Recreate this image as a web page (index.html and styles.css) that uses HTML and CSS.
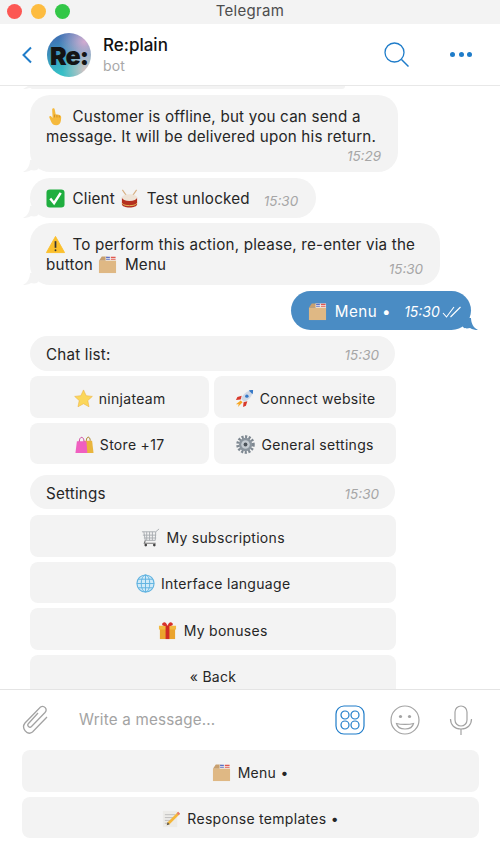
FILE: index.html
```html
<!DOCTYPE html>
<html lang="en">
<head>
    <meta charset="UTF-8">
    <meta name="viewport" content="width=device-width, initial-scale=1.0">
    <title>Telegram</title>
    <link rel="stylesheet" href="styles.css">
</head>
<body>
    <svg class="sprite" aria-hidden="true">
        <defs>
            <symbol id="e-point" viewBox="0 0 20 20">
                <path d="M7 1.500c1-.6 2 0 2.200 1l1 5 3.300.6c1.800.4 2.500 1.400 2.500 3l-.3 3c-.3 3-2.200 5-5 5-2.600 0-4-1-5-3L3.500 11c-.4-1 .8-2 1.800-1.200L7 11.500 6.500 3c0-.7 0-1.200.5-1.500z" fill="#f5b93c"/>
                <path d="M9 8v3M11.500 8.500v2.500M14 9v2" stroke="#c98320" stroke-width=".8" fill="none"/>
            </symbol>
            <symbol id="e-check" viewBox="0 0 20 20">
                <rect x=".5" y=".5" width="19" height="19" rx="3.500" fill="#1fae3f"/>
                <path d="M4.500 10l4 5 7-11" stroke="#fff" stroke-width="2.600" fill="none"/>
            </symbol>
            <symbol id="e-drum" viewBox="0 0 20 20">
                <path d="M2.500 1l5 7M17.500 1l-5 7" stroke="#d8b184" stroke-width="1.200"/>
                <path d="M2 9h16v7c0 2-3.500 3.500-8 3.500S2 18 2 16z" fill="#b5301f"/>
                <ellipse cx="10" cy="9" rx="8" ry="3.500" fill="#eee3d6"/>
                <path d="M2 15c2 2 4 2.500 8 2.500s6-.5 8-2.500" stroke="#e4b95c" stroke-width="1" fill="none"/>
            </symbol>
            <symbol id="e-warn" viewBox="0 0 20 20">
                <path d="M10 1.500L19.500 18.500H.5z" fill="#fbc02d" stroke="#fbc02d" stroke-linejoin="round"/>
                <path d="M10 6.500v7" stroke="#333" stroke-width="1.800"/>
                <circle cx="10" cy="16" r="1" fill="#333"/>
            </symbol>
            <symbol id="e-box" viewBox="0 0 20 20">
                <path d="M1 6l3-4.500h6L11 6z" fill="#c79f6f"/>
                <rect x="8" y="1.500" width="11" height="6" fill="#f3f0ee"/>
                <path d="M8.500 2.500h4M8.500 4.500h4" stroke="#5d6fc4" stroke-width="1.200"/>
                <path d="M13.500 2.500h5M13.500 4.500h5" stroke="#e0584f" stroke-width="1.200"/>
                <rect x="1" y="6" width="18" height="13" fill="#dfb884"/>
            </symbol>
            <symbol id="e-star" viewBox="0 0 20 20">
                <path d="M10 1l2.800 6 6.500.8-4.800 4.400 1.300 6.500L10 15.500l-5.800 3.200 1.300-6.500L.7 7.800 7.200 7z" fill="#fbd75b" stroke="#eeb13c" stroke-width=".6"/>
            </symbol>
            <symbol id="e-rocket" viewBox="0 0 20 20">
                <path d="M6.500 10.500C8 5.500 12.500 1.500 19 1c-.5 6.500-4.500 11-9.500 12.500z" fill="#cfd8e6"/>
                <path d="M14.500 1.500c1.500-.5 3-.5 4.500-.5 0 1.500 0 3-.5 4.500z" fill="#3578c7"/>
                <circle cx="12.500" cy="7.500" r="1.800" fill="#3578c7"/>
                <path d="M7 7L2.500 8.500 1 11.500l5-.5zM13 13l-1.500 4.500L8.500 19l.5-5z" fill="#d8392b"/>
                <path d="M6 12l2 2-5 5 1-3-3 0z" fill="#f6a623"/>
            </symbol>
            <symbol id="e-bags" viewBox="0 0 20 20">
                <path d="M10 6h8l1.500 13H9z" fill="#e9b53d"/>
                <path d="M12 6c0-5 4-5 4 0" stroke="#a77c1c" fill="none"/>
                <path d="M2 6.500h10L13 19H.5z" fill="#f05fc0"/>
                <path d="M4.500 7c0-6 5-6 5 0" stroke="#c93c97" fill="none"/>
            </symbol>
            <symbol id="e-gear" viewBox="0 0 20 20">
                <circle cx="10" cy="10" r="8" fill="none" stroke="#7d8790" stroke-width="3.500" stroke-dasharray="2.200 1.500"/>
                <circle cx="10" cy="10" r="7" fill="#8b959e"/>
                <circle cx="10" cy="10" r="4.500" fill="#c4cbd1"/>
                <circle cx="10" cy="10" r="2" fill="#4c535a"/>
            </symbol>
            <symbol id="e-cart" viewBox="0 0 20 20">
                <path d="M1 4h14.500L19 1M3 4l1.500 9h10.500l.5-9M2 7.500h14M3 10.500h13M6 4v9M9 4v9M12 4v9" stroke="#a9adb1" stroke-width="1" fill="none"/>
                <path d="M4.500 13l-1 3h12" stroke="#777" stroke-width="1.200" fill="none"/>
                <circle cx="5" cy="18" r="1.400" fill="#444"/>
                <circle cx="14" cy="18" r="1.400" fill="#444"/>
            </symbol>
            <symbol id="e-globe" viewBox="0 0 20 20">
                <circle cx="10" cy="10" r="9" fill="#cfeaf8" stroke="#61b3e0" stroke-width="1.200"/>
                <ellipse cx="10" cy="10" rx="4.500" ry="9" fill="none" stroke="#61b3e0"/>
                <path d="M10 1v18M1 10h18M2.300 5.500h15.400M2.300 14.500h15.400" stroke="#61b3e0" fill="none"/>
            </symbol>
            <symbol id="e-gift" viewBox="0 0 20 20">
                <rect x="2" y="6" width="16" height="13" fill="#eaa32c"/>
                <rect x="1" y="5" width="18" height="4" fill="#f2b93f"/>
                <rect x="8" y="5" width="4" height="14" fill="#cf2a23"/>
                <path d="M10 5C6 6 3 4 5 2s4 0 5 3c1-3 3-5 5-3s-1 4-5 3z" fill="#d8322a"/>
            </symbol>
            <symbol id="e-memo" viewBox="0 0 20 20">
                <rect x="1" y="2" width="15" height="17" fill="#ecebe8"/>
                <path d="M3 6h11M3 9h9M3 12h7M3 15h5" stroke="#b9b9b9" stroke-width=".9"/>
                <path d="M17 3l2 2L8 16l-3 1 1-3z" fill="#f4b63a"/>
                <path d="M17 3l2 2-1.500 1.500-2-2z" fill="#e57a76"/>
                <path d="M6 14l-1 3 3-1z" fill="#555"/>
            </symbol>
        </defs>
    </svg>

    <div class="titlebar">
        <div class="lights">
            <span class="light red"></span>
            <span class="light yellow"></span>
            <span class="light green"></span>
        </div>
        <div class="window-title">Telegram</div>
    </div>

    <header class="chat-head">
        <svg class="back" viewBox="0 0 12 18" width="12" height="18"><path d="M10 1.500L2.500 9l7.500 7.500" fill="none" stroke="#1f7cc9" stroke-width="2"/></svg>
        <div class="avatar">Re:</div>
        <div class="peer">
            <div class="peer-name">Re:plain</div>
            <div class="peer-status">bot</div>
        </div>
        <svg class="search" viewBox="0 0 25 25" width="25" height="25"><circle cx="10.500" cy="10.500" r="9.500" fill="none" stroke="#1f7cc9" stroke-width="1.300"/><path d="M17.500 17.500l7 7" stroke="#1f7cc9" stroke-width="1.500"/></svg>
        <div class="more"><i></i><i></i><i></i></div>
    </header>

    <main class="history">
        <div class="bubble sliver"></div>

        <div class="bubble tail m-offline">
            <svg class="emoji"><use href="#e-point"/></svg> Customer is offline, but you can send a<br>
            message. It will be delivered upon his return.
            <div class="time time-block">15:29</div>
        </div>

        <div class="bubble tail one-line m-client">
            <span><svg class="emoji"><use href="#e-check"/></svg> Client <svg class="emoji"><use href="#e-drum"/></svg> Test unlocked</span>
            <span class="time">15:30</span>
        </div>

        <div class="bubble tail m-warning">
            <svg class="emoji"><use href="#e-warn"/></svg> To perform this action, please, re-enter via the
            <div class="line-time">
                <span>button <svg class="emoji"><use href="#e-box"/></svg> Menu</span>
                <span class="time">15:30</span>
            </div>
        </div>

        <div class="bubble out">
            <span class="out-text"><svg class="emoji"><use href="#e-box"/></svg> Menu •</span>
            <span class="time">15:30</span>
            <svg class="ticks" viewBox="0 0 20 12" width="20" height="12"><path d="M1 7l3.500 4L12 1M8.500 11L18.500 1" fill="none" stroke="#fff" stroke-width="1.100"/></svg>
        </div>

        <div class="bubble kb-title m-chats">
            <span>Chat list:</span>
            <span class="time">15:30</span>
        </div>
        <div class="kb-grid">
            <button class="kb-btn"><svg class="emoji"><use href="#e-star"/></svg> ninjateam</button>
            <button class="kb-btn"><svg class="emoji"><use href="#e-rocket"/></svg> Connect website</button>
            <button class="kb-btn"><svg class="emoji"><use href="#e-bags"/></svg> Store +17</button>
            <button class="kb-btn"><svg class="emoji"><use href="#e-gear"/></svg> General settings</button>
        </div>

        <div class="bubble kb-title m-settings">
            <span>Settings</span>
            <span class="time">15:30</span>
        </div>
        <div class="kb-list">
            <button class="kb-btn"><svg class="emoji"><use href="#e-cart"/></svg> My subscriptions</button>
            <button class="kb-btn"><svg class="emoji"><use href="#e-globe"/></svg> Interface language</button>
            <button class="kb-btn"><svg class="emoji"><use href="#e-gift"/></svg> My bonuses</button>
            <button class="kb-btn">« Back</button>
        </div>
    </main>

    <footer class="composer">
        <div class="input-row">
            <svg class="attach" viewBox="0 0 26 30" width="26" height="30"><path d="M16 8L6.500 18.500C4.500 20.500 7.500 23.500 9.500 21.500L23 7.500C26 4 22 0 18.500 2L3 18C-1 23 5 31 10.500 27L25 12" fill="none" stroke="#a3a3a3" stroke-width="1.300"/></svg>
            <div class="placeholder">Write a message...</div>
            <svg class="ico-stickers" viewBox="0 0 30 30" width="30" height="30">
                <rect x="1" y="1" width="28" height="28" rx="8" fill="none" stroke="#1f7cc9" stroke-width="1.200"/>
                <g fill="none" stroke="#1f7cc9" stroke-width="1.200">
                    <circle cx="10" cy="10" r="4"/><circle cx="20" cy="10" r="4"/>
                    <circle cx="10" cy="20" r="4"/><circle cx="20" cy="20" r="4"/>
                </g>
            </svg>
            <svg class="ico-smile" viewBox="0 0 30 30" width="30" height="30">
                <circle cx="15" cy="15" r="14" fill="none" stroke="#a3a3a3" stroke-width="1.200"/>
                <circle cx="10.500" cy="11.500" r="1.600" fill="#a3a3a3"/><circle cx="19.500" cy="11.500" r="1.600" fill="#a3a3a3"/>
                <path d="M6.500 18.500c4 1.200 13 1.200 17 0-.8 3.500-4 5.500-8.500 5.500s-7.700-2-8.500-5.500z" fill="none" stroke="#a3a3a3" stroke-width="1.200"/>
            </svg>
            <svg class="ico-mic" viewBox="0 0 24 30" width="24" height="30">
                <rect x="6" y="1" width="12" height="20" rx="6" fill="none" stroke="#a3a3a3" stroke-width="1.200"/>
                <path d="M1.500 14c0 6 4 10 10.500 10s10.500-4 10.500-10M12 24v6" fill="none" stroke="#a3a3a3" stroke-width="1.200"/>
            </svg>
        </div>
        <div class="reply-keys">
            <button class="kb-btn"><svg class="emoji"><use href="#e-box"/></svg> Menu •</button>
            <button class="kb-btn"><svg class="emoji"><use href="#e-memo"/></svg> Response templates •</button>
        </div>
    </footer>
</body>
</html>
```

FILE: styles.css
```css
* {
    box-sizing: border-box;
}

html, body {
    margin: 0;
    height: 100%;
    overflow: hidden;
}

body {
    font-family: Inter, "Noto Sans", sans-serif;
    font-size: 15.2px;
    letter-spacing: .2px;
    line-height: 20px;
    color: #262626;
    background: #fff;
    display: flex;
    flex-direction: column;
}

.sprite {
    width: 0;
    height: 0;
    position: absolute;
}

.emoji {
    width: 19px;
    height: 19px;
    margin: -3px 3px -3px 1px;
    vertical-align: -1px;
}

.m-offline > .emoji,
.m-warning > .emoji,
.m-client .emoji:first-child {
    margin-left: 0;
}

/* window chrome */
.titlebar {
    height: 24px;
    flex: none;
    background: #f3f3f3;
    display: flex;
    align-items: center;
    padding-bottom: 2px;
    position: relative;
}

.lights {
    display: flex;
    gap: 9px;
    padding-left: 7px;
}

.light {
    width: 15px;
    height: 15px;
    border-radius: 50%;
}

.light.red { background: #fc5753; }
.light.yellow { background: #fdbc40; }
.light.green { background: #33c748; }

.window-title {
    position: absolute;
    left: 0;
    right: 0;
    text-align: center;
    font-size: 15px;
    letter-spacing: .3px;
    color: #4d4d4d;
}

/* chat header */
.chat-head {
    height: 62px;
    flex: none;
    display: flex;
    align-items: center;
    padding-left: 21px;
    border-bottom: 1px solid #e8e8e8;
}

.avatar {
    width: 44px;
    height: 44px;
    margin-left: 14px;
    border-radius: 50%;
    background:
        radial-gradient(circle at 85% 20%, #d3abd0 0%, rgba(211, 171, 208, 0) 50%),
        radial-gradient(circle at 90% 85%, #e0c4c4 0%, rgba(224, 196, 196, 0) 45%),
        linear-gradient(160deg, #3f74b5 15%, #35bfc6 75%);
    font-weight: 900;
    font-size: 25px;
    letter-spacing: -1px;
    line-height: 46px;
    color: #141414;
    text-align: center;
    overflow: hidden;
}

.peer {
    margin-left: 12px;
    flex: 1;
}

.peer-name {
    font-size: 17px;
    font-weight: 500;
    letter-spacing: 0;
    color: #111;
    line-height: 22px;
}

.peer-status {
    font-size: 14px;
    color: #a8a8a8;
    line-height: 20px;
}

.search {
    margin-right: 41px;
}

.more {
    display: flex;
    gap: 3.500px;
    margin-right: 28px;
}

.more i {
    width: 5px;
    height: 5px;
    border-radius: 50%;
    background: #1f7cc9;
}

/* messages */
.history {
    flex: none;
    height: 603px;
    overflow: hidden;
    padding: 0 22px 0 30px;
    display: flex;
    flex-direction: column;
    align-items: flex-start;
}

.bubble {
    background: #f3f3f3;
    border-radius: 20px;
    position: relative;
    flex: none;
}

.tail::before {
    content: "";
    position: absolute;
    left: -7px;
    bottom: 0;
    width: 20px;
    height: 12px;
    background: #f3f3f3;
    clip-path: path("M7 0 C7 5 4.500 10 0 12 C3 12 5.500 11.500 8 10 C10 10.500 13 11 15 9 L20 0 Z");
}

.sliver {
    width: 315px;
    height: 3px;
    margin-bottom: 6px;
    border-radius: 0 0 14px 14px;
}

.sliver::before {
    content: "";
    position: absolute;
    left: -7px;
    bottom: 0;
    width: 14px;
    height: 3px;
    background: #f3f3f3;
    clip-path: path("M5 0 L0 3 C3 3 5 2.500 7 2 C9 2.500 12 3 14 3 L14 0 Z");
}

.m-offline {
    padding: 12px 22px 6px 16px;
    margin-bottom: 6px;
}

.time {
    font-size: 13.500px;
    font-style: italic;
    letter-spacing: 0;
    color: #a6a6a6;
    white-space: nowrap;
}

.time-block {
    text-align: right;
    margin: -1px -5px 0 0;
}

.one-line {
    display: flex;
    align-items: center;
}

.m-client {
    height: 40px;
    padding: 2px 18px 0 16px;
    gap: 14px;
    margin-bottom: 5px;
}

.m-client .time {
    margin-top: 3px;
}

.m-warning {
    padding: 12px 25px 10px 16px;
    margin-bottom: 6px;
}

.line-time {
    display: flex;
    justify-content: space-between;
    align-items: flex-end;
}

.line-time .time {
    margin-right: -8px;
    position: relative;
    top: 4px;
}

.out {
    align-self: flex-end;
    margin-right: 7px;
    width: 180px;
    height: 39px;
    background: #4a8cc4;
    color: #fff;
    display: flex;
    align-items: center;
    padding: 2px 0 0 17px;
    margin-bottom: 6px;
}

.out::after {
    content: "";
    position: absolute;
    right: -7px;
    bottom: 0;
    width: 20px;
    height: 12px;
    background: #4a8cc4;
    clip-path: path("M13 0 C13 5 15.500 10 20 12 C17 12 14.500 11.500 12 10 C10 10.500 7 11 5 9 L0 0 Z");
}

.out-text {
    letter-spacing: .5px;
}

.out .emoji {
    margin-left: 0;
}

.out .time {
    color: #fff;
    margin-left: 13px;
    font-size: 14px;
}

.ticks {
    margin-left: 2px;
}

.kb-title {
    width: 365px;
    display: flex;
    justify-content: space-between;
    align-items: center;
    padding: 3px 16px 0;
}

.m-chats {
    height: 35px;
    margin-bottom: 5px;
}

.m-settings {
    height: 34px;
    margin-bottom: 6px;
}

.kb-grid {
    display: grid;
    grid-template-columns: 179px 182px;
    grid-auto-rows: 41.500px;
    gap: 5px;
    margin-bottom: 11px;
    flex: none;
}

.kb-list {
    display: grid;
    grid-template-columns: 366px;
    grid-auto-rows: 41.500px;
    gap: 5px;
    flex: none;
}

.kb-btn {
    font: inherit;
    font-size: 14px;
    letter-spacing: .3px;
    color: #262626;
    background: #f3f3f3;
    border: none;
    border-radius: 8px;
    padding: 4px 0 0;
    white-space: nowrap;
}

.kb-btn .emoji {
    margin: -3px 2px -3px 0;
}

/* compose area */
.composer {
    flex: 1;
    border-top: 1px solid #e4e4e4;
    background: #fff;
}

.input-row {
    height: 60px;
    display: flex;
    align-items: center;
    padding-left: 22px;
}

.placeholder {
    margin-left: 31px;
    flex: 1;
    color: #a3a3a3;
}

.ico-stickers {
    margin-right: 25px;
}

.ico-smile {
    margin-right: 29px;
}

.ico-mic {
    margin-right: 27px;
}

.reply-keys {
    display: grid;
    grid-auto-rows: 41.500px;
    gap: 5px;
    padding: 0 21px 0 22px;
}
```
